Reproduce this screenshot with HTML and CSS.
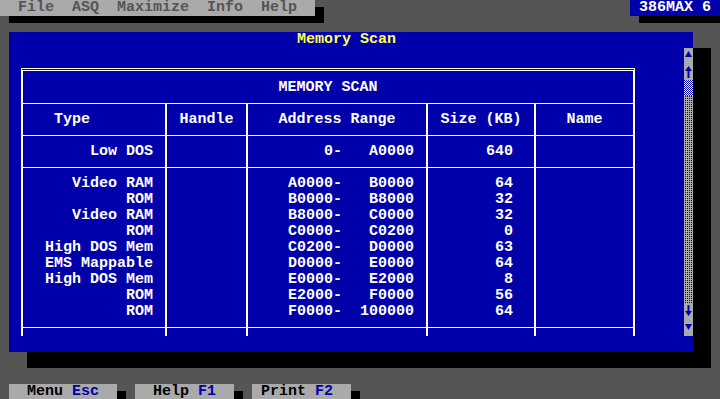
FILE: index.html
```html
<!DOCTYPE html>
<html lang="en">
<head>
    <meta charset="UTF-8">
    <meta name="viewport" content="width=device-width, initial-scale=1.0">
    <title>386MAX - Memory Scan</title>
    <link rel="stylesheet" href="styles.css">
</head>
<body>
    <div class="screen">
        <div class="topbar">
            <div class="menubar">  File  ASQ  Maximize  Info  Help  </div>
            <div class="brand"> 386MAX 6 </div>
        </div>

        <div class="window">
            <div class="main">
                <div class="title">Memory Scan</div>
                <div class="scan">
                    <div class="cap">MEMORY SCAN</div>

                    <div class="hd type">Type</div>
                    <div class="hd">Handle</div>
                    <div class="hd">Address Range</div>
                    <div class="hd">Size (KB)</div>
                    <div class="hd">Name</div>

                    <div class="type">Low DOS</div>
                    <div></div>
                    <div class="addr">    0-   A0000</div>
                    <div class="size">640</div>
                    <div></div>

                    <div class="type">Video RAM<br>ROM<br>Video RAM<br>ROM<br>High DOS Mem<br>EMS Mappable<br>High DOS Mem<br>ROM<br>ROM</div>
                    <div></div>
                    <div class="addr">A0000-   B0000<br>B0000-   B8000<br>B8000-   C0000<br>C0000-   C0200<br>C0200-   D0000<br>D0000-   E0000<br>E0000-   E2000<br>E2000-   F0000<br>F0000-  100000</div>
                    <div class="size">64<br>32<br>32<br>0<br>63<br>64<br>8<br>56<br>64</div>
                    <div></div>

                    <div class="tail"></div>
                    <div class="tail"></div>
                    <div class="tail"></div>
                    <div class="tail"></div>
                    <div class="tail"></div>
                </div>
            </div>
            <div class="scrollbar">
                <div class="sb-btn">
                    <svg width="9" height="16" viewBox="0 0 9 16"><polygon points="4.5,3 8,9 1,9"/></svg>
                </div>
                <div class="sb-btn">
                    <svg width="9" height="16" viewBox="0 0 9 16"><polygon points="4.5,2 8,7 5.5,7 5.5,14 3.5,14 3.5,7 1,7"/></svg>
                </div>
                <div class="sb-thumb"></div>
                <div class="sb-track"></div>
                <div class="sb-btn">
                    <svg width="9" height="16" viewBox="0 0 9 16"><polygon points="3.5,1 5.5,1 5.5,7 8,7 4.5,12 1,7 3.5,7"/></svg>
                </div>
                <div class="sb-btn">
                    <svg width="9" height="16" viewBox="0 0 9 16"><polygon points="1,4 8,4 4.5,10"/></svg>
                </div>
            </div>
        </div>

        <div class="keys">
            <div class="key wide">  Menu <span>Esc</span>  </div>
            <div class="key">  Help <span>F1</span>  </div>
            <div class="key"> Print <span>F2</span>  </div>
        </div>
    </div>
</body>
</html>
```

FILE: styles.css
```css
* {
    box-sizing: border-box;
}
body {
    margin: 0;
    background: #555555;
    font-family: "Liberation Mono", "DejaVu Sans Mono", monospace;
    font-size: 15px;
    font-weight: bold;
    line-height: 16px;
}
.screen {
    width: 720px;
    height: 399px;
    overflow: hidden;
    background: #555555;
}

/* top line: menu and product name */
.topbar {
    display: flex;
    justify-content: space-between;
    height: 16px;
}
.menubar {
    width: 315px;
    background: #aaaaaa;
    color: #555555;
    white-space: pre;
    box-shadow: 9px 7px 0 #000;
}
.brand {
    width: 90px;
    background: #0000aa;
    color: #fff;
    white-space: pre;
    box-shadow: 9px 7px 0 #000;
}

/* the dialog window */
.window {
    display: flex;
    width: 684px;
    height: 320px;
    margin: 16px 0 0 9px;
    background: #0000aa;
    box-shadow: 18px 16px 0 #000;
}
.main {
    width: 675px;
}
.title {
    height: 16px;
    color: #ffff55;
    text-align: center;
}

/* memory table, lines are the white showing through the gaps */
.scan {
    display: grid;
    grid-template-columns: 142px 79px 178px 106px 97px;
    grid-template-rows: 32px 31px 31px 159px 8px;
    gap: 1px 2px;
    width: 614px;
    margin: 20px 0 0 12px;
    border: 2px solid #fff;
    border-top: 3px double #fff;
    border-bottom: 0;
    background: #fff;
    background-clip: padding-box;
    color: #fff;
}
.scan > div {
    background: #0000aa;
    padding-top: 8px;
    white-space: pre;
}
.scan > .cap {
    grid-column: 1 / -1;
    text-align: center;
    padding-top: 9px;
}
.scan > .hd {
    text-align: center;
}
.scan > .type {
    text-align: right;
    padding-right: 12px;
}
.scan > .hd.type {
    text-align: left;
    padding-left: 31px;
    padding-right: 0;
}
.scan > .addr {
    text-align: right;
    padding-right: 12px;
}
.scan > .size {
    text-align: right;
    padding-right: 21px;
}
.scan > .tail {
    padding: 0;
}

/* scroll bar */
.scrollbar {
    display: flex;
    flex-direction: column;
    width: 9px;
    margin-top: 16px;
}
.sb-btn {
    height: 16px;
    background: #aaaaaa;
}
.sb-btn svg {
    display: block;
    fill: #0000aa;
}
.sb-thumb {
    height: 16px;
    background: repeating-conic-gradient(#fff 0 25%, #0000aa 0 50%) 0 0 / 2px 2px;
}
.sb-track {
    height: 208px;
    background: #aaaaaa conic-gradient(#0000aa 0 25%, transparent 0) 0 0 / 2px 2px;
}

/* function keys */
.keys {
    display: flex;
    gap: 18px;
    margin: 32px 0 0 9px;
}
.key {
    width: 99px;
    height: 16px;
    background: #aaaaaa;
    color: #000;
    white-space: pre;
    box-shadow: 9px 7px 0 #000;
}
.key.wide {
    width: 108px;
}
.key span {
    color: #0000aa;
}
```
